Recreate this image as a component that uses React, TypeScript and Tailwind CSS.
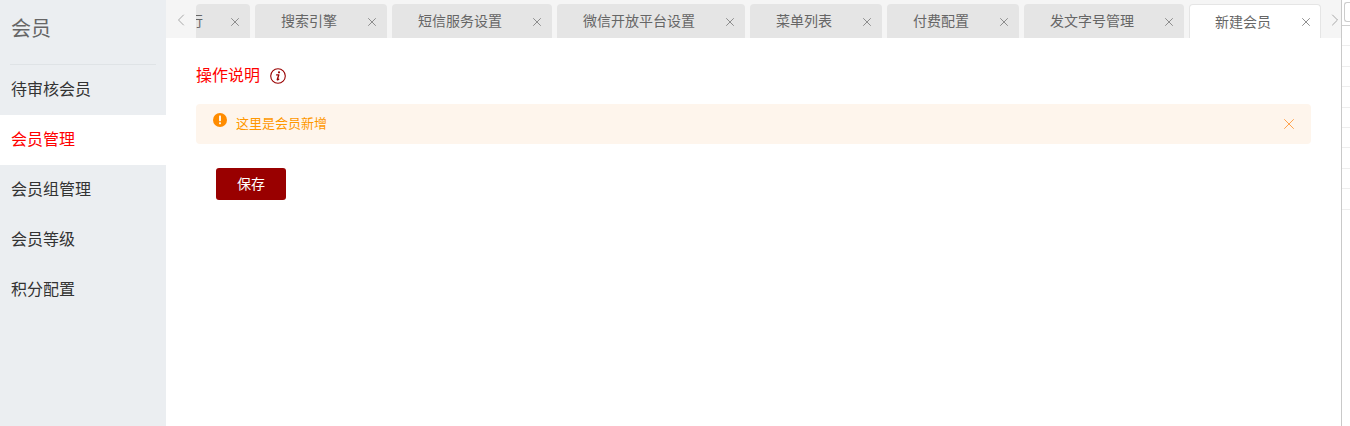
import { X, ChevronLeft, ChevronRight } from "lucide-react";

const tabs = ["搜索引擎", "短信服务设置", "微信开放平台设置", "菜单列表", "付费配置", "发文字号管理"];

const menu = ["待审核会员", "会员管理", "会员组管理", "会员等级", "积分配置"];

function Close() {
  return <X className="w-[14px] h-[14px] text-[#808080] shrink-0" strokeWidth={1.5} />;
}

export default function App() {
  return (
    <div className="w-[1350px] h-[426px] flex overflow-hidden bg-white font-['Liberation_Sans','Noto_Sans_CJK_SC',sans-serif]">
      <aside className="w-[166px] h-full bg-[#ebeef1] shrink-0">
        <div className="mx-[10px] h-[65px] border-b border-[#dfe3e6] text-[20px] leading-[58px] text-[#666] pl-px">会员</div>
        {menu.map((m, i) => (
          <div
            key={m}
            className={`h-[50px] pl-[11px] text-[16px] leading-[50px] ${i === 1 ? "bg-white text-[#f00]" : "text-[#333]"}`}
          >
            {m}
          </div>
        ))}
      </aside>

      <main className="w-[1175px] h-full shrink-0 flex flex-col">
        <div className="h-[38px] bg-[#f5f5f5] flex items-end relative overflow-hidden">
          <div className="w-[30px] h-full shrink-0 flex items-center justify-center text-[#a0a0a0]">
            <ChevronLeft className="w-[20px] h-[20px] mt-[1px]" strokeWidth={1.1} />
          </div>
          <div className="flex items-end gap-[5px] flex-1 min-w-0">
            <div className="w-[54px] h-[34px] shrink-0 bg-[#e5e5e5] rounded-t-[4px] flex items-center justify-between pt-px pr-[8px] overflow-hidden">
              <span className="block text-[14px] text-[#666] -ml-[7px]">行</span>
              <Close />
            </div>
            {tabs.map((t) => (
              <div key={t} className="h-[34px] shrink-0 bg-[#e5e5e5] rounded-t-[4px] flex items-center gap-[28px] pt-px pl-[26px] pr-[8px]">
                <span className="text-[14px] text-[#666]">{t}</span>
                <Close />
              </div>
            ))}
            <div className="h-[34px] shrink-0 bg-white border border-b-0 border-[#e5e5e5] rounded-t-[4px] flex items-center gap-[28px] pt-px pl-[25px] pr-[7px]">
              <span className="text-[14px] text-[#666]">新建会员</span>
              <Close />
            </div>
          </div>
          <div className="absolute right-0 top-0 h-[38px] w-[14px] flex items-center justify-center text-[#a0a0a0]">
            <ChevronRight className="w-[20px] h-[20px] shrink-0 mt-[2px] ml-[2px]" strokeWidth={1.1} />
          </div>
        </div>

        <div className="flex-1 px-[30px] pt-[28px]">
          <div className="flex items-center h-[20px] text-[#f00] text-[16px]">
            操作说明
            <svg className="w-[16px] h-[16px] ml-[10px] shrink-0" viewBox="0 0 16 16" fill="none">
              <circle cx="8" cy="8" r="7.3" stroke="#990000" strokeWidth="1.1" />
              <circle cx="9" cy="4.3" r="1.1" fill="#990000" />
              <path d="M6.6 6.9h2.2l-1.5 4.6c-.1.5.5.5 1.4-.2" stroke="#990000" strokeWidth="1.4" strokeLinecap="round" strokeLinejoin="round" />
            </svg>
          </div>
          <div className="mt-[18px] h-[40px] bg-[#fef5ec] rounded-[4px] flex items-center relative pl-[40px] pr-[16px]">
            <svg className="w-[14px] h-[14px] absolute left-[17px] top-[9px]" viewBox="0 0 14 14">
              <circle cx="7" cy="7" r="7" fill="#ff8c00" />
              <rect x="6" y="2.6" width="2" height="5.6" rx="0.6" fill="#fef5ec" />
              <rect x="6" y="9.2" width="2" height="2" rx="0.6" fill="#fef5ec" />
            </svg>
            <span className="text-[13px] text-[#ff9800]">这里是会员新增</span>
            <X className="ml-auto w-[18px] h-[18px] text-[#ff9a3c] -mr-[3px]" strokeWidth={1.2} />
          </div>
          <button className="block mt-[24px] ml-[20px] w-[70px] h-[32px] bg-[#990000] rounded-[3px] text-white text-[14px]">
            保存
          </button>
        </div>
      </main>

      <div className="flex-1 border-l border-[#c9c9c9] flex flex-col">
        <div className="h-[26px] border-b border-[#d0d0d0] pl-[2px]">
          <div className="w-[8px] h-[20px] border border-r-0 border-[#ccc] rounded-l-[3px] mt-[2px]" />
        </div>
        {[0, 1, 2, 3, 4, 5, 6, 7, 8].map((i) => (
          <div key={i} className="h-[20.4px] border-b border-[#eeeeee]" />
        ))}
      </div>
    </div>
  );
}
